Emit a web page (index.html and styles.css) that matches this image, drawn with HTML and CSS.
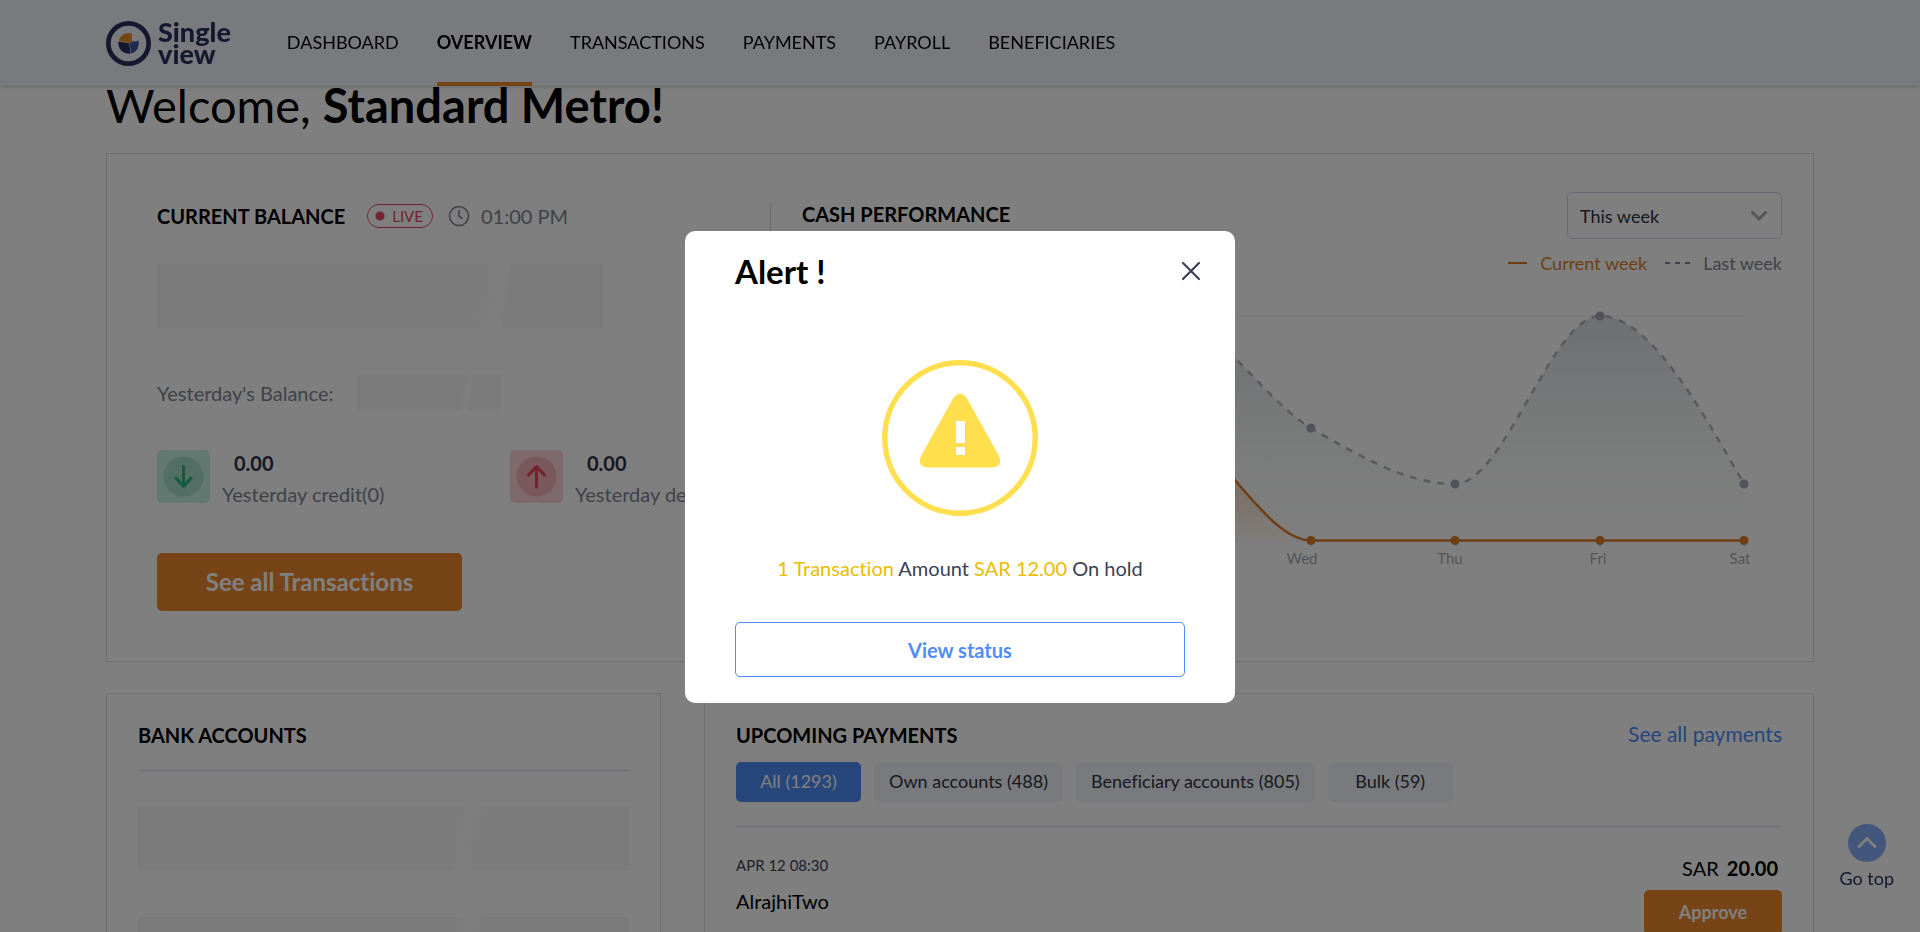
FILE: index.html
```html
<!DOCTYPE html>
<html lang="en">
<head>
<meta charset="utf-8">
<meta name="viewport" content="width=device-width, initial-scale=1">
<title>Single view - Overview</title>
<link rel="stylesheet" href="styles.css">
</head>
<body>
<header class="topbar">
  <a class="logo" href="#">
    <svg class="logo-mark" viewBox="0 0 44 44" aria-hidden="true">
      <circle cx="22" cy="22" r="19.7" fill="none" stroke="#2a3360" stroke-width="4.6"/>
      <path d="M12.2 20 L22.6 21.8 L24.2 31.8 A10.2 10.2 0 0 1 12.2 20Z" fill="#2a3360"/>
      <path d="M12.5 19.4 A10.200 10.200 0 0 1 25.4 12.2 L25 17.4 L26 19.6 L22.6 21.4Z" fill="#ed8a2d"/>
      <path d="M26.4 19.8 Q29 20.6 31.6 18.800 A10.200 10.200 0 0 1 24.700 31.8 L23 21.8Z" fill="#3f579f"/>
    </svg>
    <span class="logo-text"><span>Single</span><span>view</span></span>
  </a>
  <nav class="nav">
    <a class="nav-link" href="#">DASHBOARD</a>
    <a class="nav-link active" href="#">OVERVIEW</a>
    <a class="nav-link" href="#">TRANSACTIONS</a>
    <a class="nav-link" href="#">PAYMENTS</a>
    <a class="nav-link" href="#">PAYROLL</a>
    <a class="nav-link" href="#">BENEFICIARIES</a>
  </nav>
</header>

<main class="page">
  <h1 class="welcome">Welcome, <strong>Standard Metro!</strong></h1>

  <section class="card summary">
    <div class="balance">
      <div class="balance-head">
        <h2 class="heading">CURRENT BALANCE</h2>
        <span class="live"><span class="live-dot"></span>LIVE</span>
        <span class="time">
          <svg class="clock" viewBox="0 0 22 22" aria-hidden="true"><circle cx="11" cy="11" r="9.5"/><path d="M11 5.5V11.2L13.8 13.4"/></svg>
          01:00 PM
        </span>
      </div>
      <div class="skeleton amount"></div>
      <div class="yesterday">Yesterday's Balance: <span class="skeleton small"></span></div>
      <div class="flows">
        <div class="flow">
          <svg class="flow-icon" viewBox="0 0 53 53" aria-hidden="true">
            <rect width="53" height="53" rx="5" fill="#c6f0e0"/><circle cx="26.5" cy="26.5" r="20" fill="#a6dcc8"/>
            <path d="M26.5 16.5V36.5M19 28L26.5 36.5L34 28" stroke="#2cb57f"/>
          </svg>
          <div><div class="flow-amount">0.00</div><div class="flow-label">Yesterday credit(0)</div></div>
        </div>
        <div class="flow">
          <svg class="flow-icon" viewBox="0 0 53 53" aria-hidden="true">
            <rect width="53" height="53" rx="5" fill="#fcd3d8"/><circle cx="26.5" cy="26.5" r="20" fill="#f4b3bb"/>
            <path d="M26.5 37V16.5M18.5 25L26.5 16.5L34.5 25" stroke="#ee4060"/>
          </svg>
          <div><div class="flow-amount">0.00</div><div class="flow-label">Yesterday debit(0)</div></div>
        </div>
      </div>
      <button class="btn-orange all-transactions" type="button">See all Transactions</button>
    </div>
    <div class="performance">
      <div class="performance-head">
        <h2 class="heading">CASH PERFORMANCE</h2>
        <span class="period">
          <select class="period-select" aria-label="Period"><option>This week</option></select>
          <svg class="chevron" viewBox="0 0 16 10" aria-hidden="true"><path d="M1.5 1.5L8 8L14.5 1.5"/></svg>
        </span>
      </div>
      <div class="legend">
        <span class="legend-item current"><svg class="legend-line" viewBox="0 0 20 4"><path d="M0 2H19"/></svg>Current week</span>
        <span class="legend-item last"><svg class="legend-dashes" viewBox="0 0 26 4"><path d="M0 2H26" stroke-dasharray="5 5"/></svg>Last week</span>
      </div>
      <svg class="chart" viewBox="0 0 980 275" role="img" aria-label="Cash performance by day">
        <defs>
          <linearGradient id="greyFill" x1="0" y1="16" x2="0" y2="240" gradientUnits="userSpaceOnUse"><stop offset="0" stop-color="#7d8390" stop-opacity=".27"/><stop offset="1" stop-color="#d8e4df" stop-opacity=".04"/></linearGradient>
          <linearGradient id="orangeFill" x1="0" y1="128" x2="0" y2="240" gradientUnits="userSpaceOnUse"><stop offset="0" stop-color="#ee8a2e" stop-opacity=".45"/><stop offset="1" stop-color="#ee8a2e" stop-opacity=".04"/></linearGradient>
        </defs>
        <path class="grid-line" d="M75 16H943M75 241H943"/>
        <path class="tick" d="M509 241V247M654 241V247M798 241V247M943 241V247"/>
        <path fill="url(#greyFill)" d="M75 184C123 184 171 16 364 16C412 16 461 100 509 128C557 156 605 184 653 184C702 184 750 16 798 16C846 16 894 100 942 184V240H75Z"/>
        <path fill="url(#orangeFill)" d="M219 240C267 240 316 128 364 128C412 128 461 240 509 240Z"/>
        <path class="line-last" d="M75 184C123 184 171 16 364 16C412 16 461 100 509 128C557 156 605 184 653 184C702 184 750 16 798 16C846 16 894 100 942 184"/>
        <path class="line-current" d="M75 240.500H219C267 240.500 316 128 364 128C412 128 461 240.500 509 240.500H942"/>
        <g fill="#a3a9b4"><circle cx="509" cy="128" r="4.5"/><circle cx="653" cy="184" r="4.5"/><circle cx="798" cy="16" r="4.5"/><circle cx="942" cy="184" r="4.5"/></g>
        <g fill="#dc7f28"><circle cx="509" cy="240.5" r="4.5"/><circle cx="653" cy="240.5" r="4.5"/><circle cx="798" cy="240.5" r="4.5"/><circle cx="942" cy="240.5" r="4.5"/></g>
        <g class="axis"><text x="500" y="264">Wed</text><text x="648" y="264">Thu</text><text x="796" y="264">Fri</text><text x="938" y="264">Sat</text></g>
      </svg>
    </div>
  </section>

  <div class="lower">
    <section class="card accounts">
      <h2 class="heading">BANK ACCOUNTS</h2>
      <div class="account-list">
        <div class="skeleton row"></div>
        <div class="skeleton row"></div>
        <div class="skeleton row"></div>
      </div>
    </section>
    <section class="card payments">
      <div class="payments-head">
        <h2 class="heading">UPCOMING PAYMENTS</h2>
        <a class="see-all" href="#">See all payments</a>
      </div>
      <div class="tabs">
        <button class="tab selected" type="button">All (1293)</button>
        <button class="tab" type="button">Own accounts (488)</button>
        <button class="tab" type="button">Beneficiary accounts (805)</button>
        <button class="tab" type="button">Bulk (59)</button>
      </div>
      <div class="payment">
        <div>
          <div class="payment-date">APR 12 08:30</div>
          <div class="payment-name">AlrajhiTwo</div>
        </div>
        <div class="payment-side">
          <div class="payment-amount">SAR <strong>20.00</strong></div>
          <button class="btn-orange approve" type="button">Approve</button>
        </div>
      </div>
    </section>
  </div>
</main>

<a class="go-top" href="#">
  <svg class="go-top-icon" viewBox="0 0 38 38" aria-hidden="true"><circle cx="19" cy="19" r="19" fill="#86aef8"/><path d="M11 22.5L19 14.5L27 22.5" fill="none" stroke="#fff" stroke-width="3" stroke-linecap="round" stroke-linejoin="round"/></svg>
  Go top
</a>

<div class="overlay">
  <div class="modal" role="dialog" aria-modal="true" aria-labelledby="alert-title">
    <div class="modal-head">
      <h2 class="modal-title" id="alert-title">Alert !</h2>
      <button class="close" type="button" aria-label="Close">
        <svg viewBox="0 0 20 20" width="20" height="20" aria-hidden="true"><path d="M2 2L18 18M18 2L2 18"/></svg>
      </button>
    </div>
    <svg class="warning" viewBox="0 0 156 156" aria-hidden="true">
      <circle cx="78" cy="78" r="75.2" fill="none" stroke="#ffdf4d" stroke-width="5.4"/>
      <path d="M71 38.5Q78 29 85 38.5L117 96Q121 107 110 107.500H46Q35 107 39 96Z" fill="#ffdf4d"/>
      <path d="M74 61H83V83H74ZM74 87H83V95H74Z" fill="#fff"/>
    </svg>
    <p class="modal-text"><span class="hold">1 Transaction</span> Amount <span class="hold">SAR 12.00</span> On hold</p>
    <button class="view-status" type="button">View status</button>
  </div>
</div>
</body>
</html>
```
FILE: styles.css
```css
* { box-sizing: border-box; }

body {
  margin: 0;
  height: 100vh;
  overflow: hidden;
  background: #fff;
  color: #000;
  font-family: Lato, "Open Sans", sans-serif;
  font-size: 20px;
  font-variant-ligatures: none;
  line-height: 24px;
}

h1, h2, p { margin: 0; }
a { color: inherit; text-decoration: none; }
button, select { font: inherit; font-variant-ligatures: none; cursor: pointer; }

.topbar {
  position: fixed;
  top: 0;
  left: 0;
  right: 0;
  z-index: 1;
  display: flex;
  gap: 56px;
  height: 86px;
  padding: 0 106px;
  background: #f3f5fd;
  box-shadow: 0 1px 4px rgba(0, 0, 0, .2);
}

.logo { display: flex; align-items: center; gap: 7px; color: #2a3360; }
.logo-mark { width: 45px; height: 45px; }
.logo-text { display: grid; font-size: 27px; font-weight: 900; line-height: 22px; }

.nav { display: flex; gap: 38px; font-size: 18px; }
.nav-link { display: flex; align-items: center; border-bottom: 4px solid transparent; border-top: 2px solid transparent; }
.nav-link.active { border-bottom-color: #ec882c; font-weight: 700; }

.page { padding: 77px 106px 0; }
.welcome { margin-bottom: 20px; font-size: 47px; font-weight: 400; line-height: 56px; }
.welcome strong { font-weight: 700; }

.card { border: 1px solid #dcdee6; background: #fff; }
.heading { font-size: 20px; font-weight: 700; line-height: 24px; }

.summary { display: grid; grid-template-columns: 614px 1fr; min-height: 509px; padding: 38px 31px 50px 50px; }

.balance { margin-top: 11px; border-right: 1px solid #d3d6e2; }
.balance-head { display: flex; align-items: center; height: 26px; margin-bottom: 35px; }
.live { display: flex; align-items: center; gap: 8px; height: 24px; margin: 0 15px 0 22px; padding: 0 9px 0 8px; border: 1px solid #ee4060; border-radius: 12px; color: #ee4060; font-size: 15px; }
.live-dot { width: 8px; height: 8px; border-radius: 50%; background: #ee4060; box-shadow: 0 0 0 1px #d9b0ba; }
.time { display: flex; align-items: center; gap: 11px; color: #7e8594; }
.clock { width: 22px; height: 22px; fill: none; stroke: #7e8594; stroke-width: 1.6; stroke-linecap: round; }

.skeleton { background: linear-gradient(98deg, #f7f7f7 72%, #fdfdfd 75%, #fdfdfd 77%, #f7f7f7 78%); }
.skeleton.amount { width: 446px; height: 64px; margin-bottom: 47px; }
.skeleton.small { width: 144px; height: 35px; }
.skeleton.row { height: 64px; background-image: linear-gradient(98deg, #f7f7f7 64%, #fdfdfd 66%, #fdfdfd 67%, #f7f7f7 69%); }

.yesterday { display: flex; align-items: center; gap: 24px; margin-bottom: 40px; color: #7e8594; }
.flows { display: grid; grid-template-columns: 353px 1fr; margin-bottom: 45px; }
.flow { display: flex; gap: 12px; height: 58px; color: #7e8594; white-space: nowrap; }
.flow-icon { flex: none; width: 53px; height: 53px; fill: none; stroke-width: 3; stroke-linecap: round; stroke-linejoin: round; }
.flow-amount { margin-bottom: 7px; padding: 1px 0 0 12px; color: #2e3340; font-weight: 700; }

.btn-orange { border: 0; border-radius: 5px; background: #ec882c; color: #fff; font-weight: 700; }
.all-transactions { width: 305px; height: 58px; font-size: 24px; }

.performance { padding-left: 31px; }
.performance-head { display: flex; justify-content: space-between; margin-bottom: 12px; }
.performance-head .heading { padding-top: 10px; }
.period { position: relative; width: 215px; }
.period-select { width: 100%; height: 47px; padding: 0 12px; border: 1px solid #cfd4e2; border-radius: 5px; background: #fff; color: #2e3340; font-size: 18px; appearance: none; }
.chevron { position: absolute; top: 19px; right: 15px; width: 16px; height: 10px; fill: none; stroke: #a9acb3; stroke-width: 3; pointer-events: none; stroke-linecap: round; }
.legend { display: flex; justify-content: flex-end; gap: 18px; font-size: 18px; color: #7e8594; }
.legend-item { display: flex; align-items: center; gap: 12px; }
.legend-item svg { fill: none; stroke: currentColor; stroke-width: 2; }
.legend-item.current { color: #dc7f28; }
.legend-line { width: 20px; height: 4px; }
.legend-dashes { width: 26px; height: 4px; }

.chart { display: block; width: 100%; margin-top: 25px; }
.grid-line { stroke: #ececf4; }
.tick { stroke: #c8ccd8; }
.line-last { fill: none; stroke: #b0b4be; stroke-width: 2.5; stroke-dasharray: 7 7; }
.line-current { fill: none; stroke: #dc7f28; stroke-width: 2.5; }
.axis { fill: #a7abb5; font-size: 15px; text-anchor: middle; }

.lower { display: grid; grid-template-columns: 555fr 1110fr; gap: 43px; margin-top: 31px; }
.accounts, .payments { padding: 29px 31px 32px; }
.accounts .heading { padding: 0 0 23px; border-bottom: 1px solid #d5d8ea; line-height: 24px; }
.account-list { display: grid; gap: 46px; margin-top: 36px; }

.payments-head { display: flex; justify-content: space-between; align-items: flex-end; margin-bottom: 15px; }
.see-all { padding-bottom: 2px; color: #4f8df8; font-size: 21px; line-height: 22px; }
.tabs { display: flex; gap: 13px; padding-bottom: 24px; border-bottom: 1px solid #d5d8ea; }
.tab { min-width: 125px; height: 40px; padding: 0 15px 3px; border: 0; border-radius: 5px; background: #f3f5fd; color: #2e3340; font-size: 18px; }
.tab.selected { background: #4f8df8; color: #fff; }
.payment { display: flex; justify-content: space-between; padding-top: 26px; }
.payment-date { margin-bottom: 12px; color: #3b4252; font-size: 15px; }
.payment-side { display: flex; flex-direction: column; align-items: flex-end; gap: 10px; }
.payment-amount { padding: 3px 4px 0 0; }
.payment-amount strong { margin-left: 3px; }
.approve { width: 138px; height: 45px; padding-bottom: 3px; font-size: 18px; }

.go-top { position: fixed; right: 26px; bottom: 42px; display: flex; flex-direction: column; align-items: center; gap: 4px; color: #2a3360; font-size: 18px; }
.go-top-icon { width: 38px; height: 38px; }

.overlay { position: fixed; inset: 0; z-index: 2; display: flex; align-items: center; justify-content: center; padding-top: 2px; background: rgba(0, 0, 0, .5); }
.modal { display: flex; flex-direction: column; width: 550px; max-width: 100%; padding: 20px 50px 26px; border-radius: 10px; background: #fff; }
.modal-head { display: flex; align-items: center; justify-content: space-between; height: 40px; margin-bottom: 69px; }
.modal-title { font-size: 33px; font-weight: 700; line-height: 40px; }
.close { display: flex; margin-right: -20px; padding: 4px; border: 0; background: none; }
.close svg { fill: none; stroke: #3b4252; stroke-width: 2.2; stroke-linecap: round; }
.warning { align-self: center; width: 156px; height: 156px; }
.modal-text { margin: 40px 0 42px; color: #3b4252; text-align: center; }
.hold { color: #eabc00; }
.view-status { height: 55px; border: 1px solid #4f8df8; border-radius: 5px; background: #fff; color: #4f8df8; font-weight: 700; }
```
